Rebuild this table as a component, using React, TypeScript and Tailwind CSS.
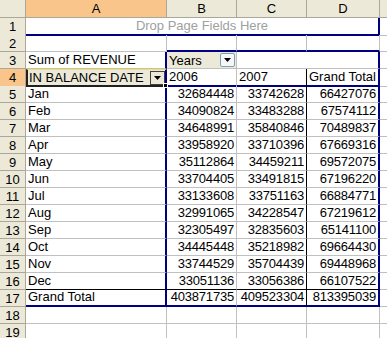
import type { ReactNode } from "react";

const GRID = "grid grid-cols-[26px_141px_70px_70px_73px_1fr]";

const rows: [string, number, number, number][] = [
  ["Jan", 32684448, 33742628, 66427076],
  ["Feb", 34090824, 33483288, 67574112],
  ["Mar", 34648991, 35840846, 70489837],
  ["Apr", 33958920, 33710396, 67669316],
  ["May", 35112864, 34459211, 69572075],
  ["Jun", 33704405, 33491815, 67196220],
  ["Jul", 33133608, 33751163, 66884771],
  ["Aug", 32991065, 34228547, 67219612],
  ["Sep", 32305497, 32835603, 65141100],
  ["Oct", 34445448, 35218982, 69664430],
  ["Nov", 33744529, 35704439, 69448968],
  ["Dec", 33051136, 33056386, 66107522],
];

// row number on the left edge
function RowHead({ n, active }: { n: number; active?: boolean }) {
  return (
    <div
      className={`flex items-center justify-center border-b border-r border-[#aca899] ${
        active ? "bg-[#f9c58b]" : "bg-[#ece9d8]"
      }`}
    >
      {n}
    </div>
  );
}

function ColHead({ label, active }: { label: string; active?: boolean }) {
  return (
    <div
      className={`flex items-center justify-center border-b border-r border-[#aca899] ${
        active ? "bg-[#f9c58b]" : "bg-[#ece9d8]"
      }`}
    >
      {label}
    </div>
  );
}

function Cell({ children, className = "" }: { children?: ReactNode; className?: string }) {
  return (
    <div className={`flex items-end overflow-hidden whitespace-nowrap px-[2px] pb-px ${className}`}>
      {children}
    </div>
  );
}

function DropButton({ blue }: { blue?: boolean }) {
  return (
    <div
      className={`flex h-[14px] w-[15px] items-center justify-center ${
        blue
          ? "rounded-[2px] border border-[#7f9db9] bg-[#f4f6f8]"
          : "border border-[#404040] bg-[#ece9d8]"
      }`}
    >
      <svg width="7" height="4" viewBox="0 0 7 4">
        <path d="M0 0h7L3.5 4z" fill="#000" />
      </svg>
    </div>
  );
}

export default function App() {
  return (
    <div
      className="h-[338px] w-[387px] overflow-hidden bg-white text-[13px] leading-[15px] text-black"
      style={{ fontFamily: '"Liberation Sans", Arial, sans-serif' }}
    >
      {/* column headers */}
      <div className={`${GRID} h-[18px]`}>
        <div className="border-b border-r border-[#aca899] bg-[#ece9d8]" />
        <ColHead label="A" active />
        <ColHead label="B" />
        <ColHead label="C" />
        <ColHead label="D" />
        <div className="border-b border-[#aca899] bg-[#ece9d8]" />
      </div>

      {/* row 1: page field drop zone */}
      <div className={`${GRID} h-[17px]`}>
        <RowHead n={1} />
        <div className="col-span-4 flex items-end justify-center border-b-2 border-r-2 border-[#000080] pb-px text-[#a0a0a0]">
          Drop Page Fields Here
        </div>
        <Cell className="border-b border-[#c0c0c0]" />
      </div>

      {/* row 2 */}
      <div className={`${GRID} h-[17px]`}>
        <RowHead n={2} />
        <Cell className="border-b border-r border-[#c0c0c0]" />
        <Cell className="border-b-2 border-r border-b-[#000080] border-r-[#c0c0c0]" />
        <Cell className="border-b-2 border-r border-b-[#000080] border-r-[#c0c0c0]" />
        <Cell className="border-b-2 border-r border-b-[#000080] border-r-[#c0c0c0]" />
        <Cell className="border-b border-[#c0c0c0]" />
      </div>

      {/* row 3 */}
      <div className={`${GRID} h-[17px]`}>
        <RowHead n={3} />
        <Cell className="border-b border-r-2 border-b-[#c0c0c0] border-r-[#000080]">Sum of REVENUE</Cell>
        <div className="flex items-center border-b border-r border-[#c0c0c0] bg-[#ece9d8] pr-px">
          <span className="flex-1 px-[2px]">Years</span>
          <DropButton blue />
        </div>
        <Cell className="border-b border-[#c0c0c0]" />
        <Cell className="border-b border-r-2 border-b-[#c0c0c0] border-r-[#000080]" />
        <Cell className="border-b border-[#c0c0c0]" />
      </div>

      {/* row 4 */}
      <div className={`${GRID} h-[17px]`}>
        <RowHead n={4} active />
        <div className="relative flex items-center border-b-2 border-l-2 border-r-2 border-t border-b-[#202020] border-l-[#202020] border-r-[#000080] border-t-[#f0e060] bg-[#ece9d8]">
          <span className="flex-1 px-px">IN BALANCE DATE</span>
          <DropButton />
          <div className="absolute -bottom-[3px] -right-[3px] h-[5px] w-[5px] border border-white bg-black" />
        </div>
        <Cell className="border-b-2 border-r border-b-[#000080] border-r-[#c0c0c0]">2006</Cell>
        <Cell className="border-b-2 border-r border-b-[#000080] border-r-black">2007</Cell>
        <Cell className="border-b-2 border-r-2 border-[#000080]">Grand Total</Cell>
        <Cell className="border-b border-[#c0c0c0]" />
      </div>

      {/* months */}
      {rows.map(([m, a, b, t], i) => {
        const last = i === rows.length - 1;
        const bottom = last ? "border-b-black" : "border-b-[#c0c0c0]";
        return (
          <div key={m} className={`${GRID} h-[17px]`}>
            <RowHead n={i + 5} />
            <Cell className={`border-b border-r-2 ${bottom} border-r-[#000080]`}>{m}</Cell>
            <Cell className={`justify-end border-b border-r ${bottom} border-r-[#c0c0c0] tracking-[-0.2px]`}>{a}</Cell>
            <Cell className={`justify-end border-b border-r ${bottom} border-r-black tracking-[-0.2px]`}>{b}</Cell>
            <Cell className={`justify-end border-b border-r-2 ${bottom} border-r-[#000080] tracking-[-0.2px]`}>{t}</Cell>
            <Cell className="border-b border-[#c0c0c0]" />
          </div>
        );
      })}

      {/* grand total */}
      <div className={`${GRID} h-[17px]`}>
        <RowHead n={17} />
        <Cell className="border-b-2 border-r-2 border-[#000080]">Grand Total</Cell>
        <Cell className="justify-end border-b-2 border-r border-b-[#000080] border-r-[#c0c0c0] tracking-[-0.2px]">403871735</Cell>
        <Cell className="justify-end border-b-2 border-r border-b-[#000080] border-r-black tracking-[-0.2px]">409523304</Cell>
        <Cell className="justify-end border-b-2 border-r-2 border-[#000080] tracking-[-0.2px]">813395039</Cell>
        <Cell className="border-b border-[#c0c0c0]" />
      </div>

      {[18, 19].map((n) => (
        <div key={n} className={`${GRID} h-[17px]`}>
          <RowHead n={n} />
          <Cell className="border-b border-r border-[#c0c0c0]" />
          <Cell className="border-b border-r border-[#c0c0c0]" />
          <Cell className="border-b border-r border-[#c0c0c0]" />
          <Cell className="border-b border-r border-[#c0c0c0]" />
          <Cell className="border-b border-[#c0c0c0]" />
        </div>
      ))}
    </div>
  );
}
